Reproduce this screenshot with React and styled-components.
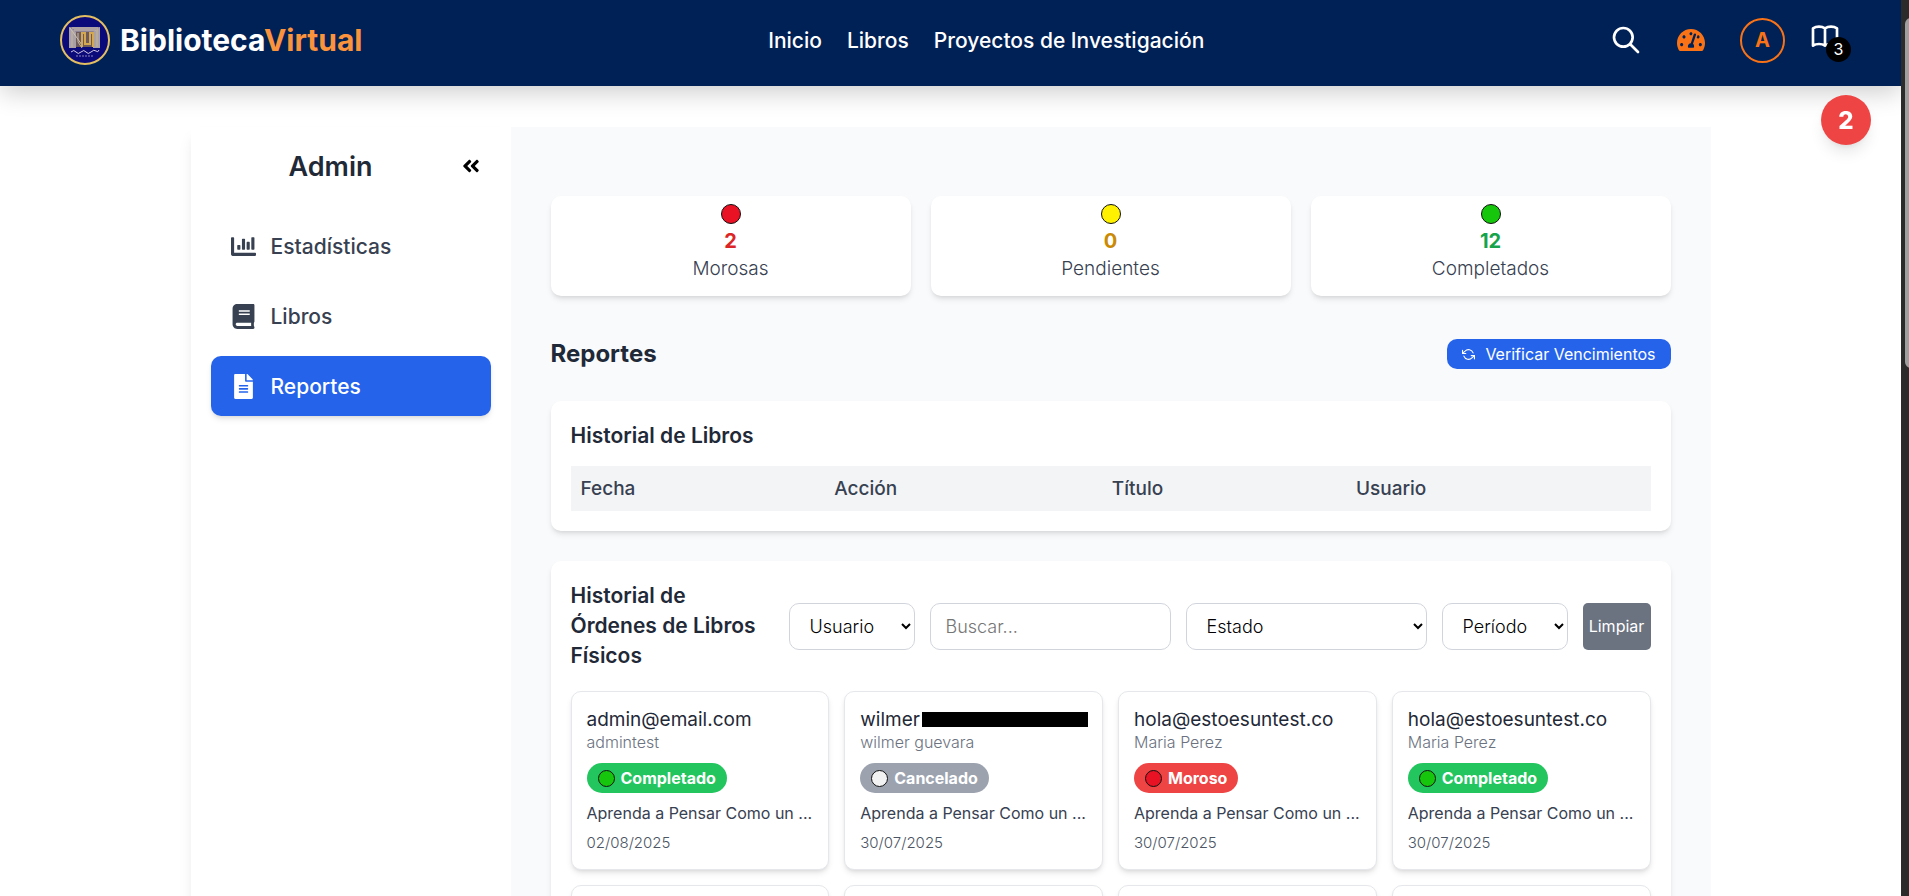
import React from "react";
import styled, { createGlobalStyle, css } from "styled-components";
import { FaChartBar, FaBook, FaFileAlt, FaTachometerAlt, FaAngleDoubleLeft } from "react-icons/fa";
import { FiRefreshCcw } from "react-icons/fi";
import { HiOutlineSearch, HiOutlineBookOpen } from "react-icons/hi";

const GlobalStyle = createGlobalStyle`
  *, *::before, *::after { box-sizing: border-box; }
  body {
    margin: 0;
    background: #fff;
    color: #1f2937;
    font-family: Inter, "Open Sans", sans-serif;
  }
  h1, h2, h3, p { margin: 0; }
  button, input, select { font: inherit; }
`;

const Window = styled.div`
  display: grid;
  grid-template-columns: minmax(0, 1fr) 8px;
  height: 100vh;
  overflow: hidden;
`;

const Page = styled.div`
  overflow: hidden;
`;

const ScrollTrack = styled.div`
  background: #2b2b2b;
  padding: 18px 0 0 4px;
  overflow: hidden;
`;

const ScrollThumb = styled.div`
  width: 12px;
  height: 350px;
  border-radius: 6px;
  background: #9f9f9f;
`;

const Header = styled.header`
  position: relative;
  display: flex;
  justify-content: space-between;
  align-items: center;
  height: 86px;
  padding: 0 50px 6px 60px;
  background: #002156;
  color: #fff;
  box-shadow: 0 6px 24px rgba(0, 0, 0, 0.2);
`;

const Brand = styled.a`
  display: flex;
  align-items: center;
  gap: 10px;
  color: #fff;
  font-size: 30px;
  font-weight: 700;
  text-decoration: none;
`;

const BrandAccent = styled.span`
  color: #fb923c;
`;

const Nav = styled.nav`
  display: flex;
  gap: 25px;
`;

const NavLink = styled.a`
  color: #fff;
  font-size: 21px;
  font-weight: 500;
  text-decoration: none;
`;

const Actions = styled.div`
  display: flex;
  align-items: center;
`;

const IconButton = styled.button`
  display: flex;
  margin: 0 35px 0 0;
  padding: 0;
  border: 0;
  background: none;
  color: ${(p) => p.$color || "#fff"};
`;

const Avatar = styled.button`
  width: 45px;
  height: 45px;
  margin: 0 20px 0 0;
  padding: 0;
  border: 2px solid #f97316;
  border-radius: 50%;
  background: none;
  color: #f97316;
  font-size: 20px;
  font-weight: 700;
`;

const CartButton = styled.button`
  position: relative;
  display: flex;
  align-items: flex-start;
  width: 46px;
  height: 44px;
  padding: 2px 0 0 4px;
  border: 0;
  background: none;
  color: #fff;
`;

const CartCount = styled.span`
  position: absolute;
  right: 0;
  bottom: 0;
  width: 25px;
  height: 25px;
  border-radius: 50%;
  background: #000;
  font-size: 16px;
  line-height: 25px;
  text-align: center;
`;

const Alert = styled.button`
  position: fixed;
  top: 95px;
  right: 38px;
  width: 50px;
  height: 50px;
  padding: 0;
  border: 0;
  border-radius: 50%;
  background: #ef4444;
  color: #fff;
  font-size: 24px;
  font-weight: 800;
  box-shadow: 0 10px 15px -3px rgba(0, 0, 0, 0.1), 0 4px 6px -4px rgba(0, 0, 0, 0.1);
`;

const Dashboard = styled.div`
  display: flex;
  width: 80%;
  max-width: 1520px;
  margin: 41px auto 0;
`;

const Sidebar = styled.aside`
  flex: 0 0 320px;
  padding: 20px;
  background: #fff;
  box-shadow: 0 10px 15px -3px rgba(0, 0, 0, 0.1), 0 4px 6px -4px rgba(0, 0, 0, 0.1);
`;

const SidebarHead = styled.div`
  display: flex;
  align-items: center;
  height: 38px;
`;

const SidebarTitle = styled.h1`
  flex: 1;
  font-size: 27px;
  font-weight: 600;
  text-align: center;
`;

const Collapse = styled.button`
  display: flex;
  justify-content: center;
  width: 40px;
  padding: 0;
  border: 0;
  background: none;
  color: #000;
`;

const Menu = styled.nav`
  display: flex;
  flex-direction: column;
  gap: 10px;
  margin-top: 31px;
`;

const MenuItem = styled.button`
  display: flex;
  align-items: center;
  gap: 15px;
  height: 60px;
  padding: 0 20px;
  border: 0;
  border-radius: 10px;
  background: none;
  color: #374151;
  font-size: 21px;
  font-weight: 500;
  ${(p) =>
    p.$active &&
    css`
      background: #2563eb;
      color: #fff;
      box-shadow: 0 4px 6px -1px rgba(0, 0, 0, 0.1), 0 2px 4px -2px rgba(0, 0, 0, 0.1);
    `}
`;

const Content = styled.main`
  flex: 1;
  min-width: 0;
  padding: 69px 40px 40px;
  background: #f9fafb;
`;

const panel = css`
  border-radius: 10px;
  background: #fff;
  box-shadow: 0 4px 6px -1px rgba(0, 0, 0, 0.1), 0 2px 4px -2px rgba(0, 0, 0, 0.1);
`;

const Stats = styled.section`
  display: grid;
  grid-template-columns: repeat(3, 1fr);
  gap: 20px;
`;

const StatCard = styled.div`
  ${panel}
  display: flex;
  flex-direction: column;
  align-items: center;
  height: 100px;
  padding-top: 8px;
`;

const Dot = styled.span`
  width: ${(p) => p.$size}px;
  height: ${(p) => p.$size}px;
  border: 1px solid #111;
  border-radius: 50%;
  background: ${(p) => p.$color};
`;

const StatValue = styled.strong`
  margin-top: 3px;
  color: ${(p) => p.$color};
  font-size: 20px;
  font-weight: 700;
  line-height: 28px;
`;

const StatLabel = styled.span`
  color: #374151;
  font-size: 19px;
  font-weight: 300;
  line-height: 28px;
`;

const TitleRow = styled.div`
  display: flex;
  justify-content: space-between;
  align-items: center;
  margin: 40px 0 29px;
`;

const Title = styled.h2`
  font-size: 24px;
  font-weight: 700;
  line-height: 36px;
`;

const VerifyButton = styled.button`
  display: flex;
  align-items: center;
  gap: 10px;
  height: 30px;
  padding: 0 15px;
  border: 0;
  border-radius: 10px;
  background: #2563eb;
  color: #fff;
  font-size: 16px;
  font-weight: 400;
`;

const Panel = styled.section`
  ${panel}
  padding: 20px;
  margin-bottom: 30px;
`;

const PanelTitle = styled.h3`
  flex: ${(p) => (p.$width ? `0 0 ${p.$width}px` : "none")};
  font-size: 21px;
  font-weight: 600;
  line-height: 30px;
`;

const Table = styled.table`
  width: 100%;
  margin-top: 15px;
  border-collapse: collapse;
  table-layout: fixed;
`;

const Th = styled.th`
  width: ${(p) => p.$width};
  height: 45px;
  padding: 0 10px;
  background: #f3f4f6;
  color: #374151;
  font-size: 19px;
  font-weight: 500;
  text-align: left;
`;

const Filters = styled.form`
  display: flex;
  align-items: center;
  gap: 15px;
`;

const field = css`
  height: 47px;
  min-width: 0;
  border: 1px solid #d1d5db;
  border-radius: 10px;
  background: #fff;
  color: #000;
  font-size: 18px;
  font-weight: 300;
`;

const Select = styled.select`
  ${field}
  flex: ${(p) => (p.$wide ? "1 1 240px" : "0 0 126px")};
  padding: 0 0 0 16px;
`;

const Input = styled.input`
  ${field}
  flex: 1 1 240px;
  padding: 0 15px;
  &::placeholder { color: #757575; opacity: 1; }
`;

const ClearButton = styled.button`
  flex: 0 0 68px;
  height: 47px;
  padding: 0;
  border: 0;
  border-radius: 5px;
  background: #6b7280;
  color: #fff;
  font-size: 16px;
`;

const Orders = styled.div`
  display: grid;
  grid-template-columns: repeat(4, minmax(0, 1fr));
  gap: 15px;
  margin-top: 20px;
`;

const OrderCard = styled.article`
  ${panel}
  display: flex;
  flex-direction: column;
  align-items: flex-start;
  height: 179px;
  padding: 15px;
  border: 1px solid #e5e7eb;
`;

const Email = styled.p`
  display: flex;
  align-items: center;
  gap: 2px;
  font-size: 19px;
  line-height: 25px;
`;

const Redaction = styled.span`
  width: 166px;
  height: 15px;
  background: #000;
`;

const Person = styled.p`
  color: #6b7280;
  font-size: 16px;
  font-weight: 300;
  line-height: 20px;
`;

const Badge = styled.span`
  display: flex;
  align-items: center;
  gap: 6px;
  height: 30px;
  margin: 11px 0 10px;
  padding: 0 11px;
  border-radius: 15px;
  background: ${(p) => p.$color};
  color: #fff;
  font-size: 16px;
  font-weight: 700;
`;

const BookName = styled.p`
  color: #374151;
  font-size: 16px;
  line-height: 20px;
`;

const OrderDate = styled.time`
  margin-top: 10px;
  color: #4b5563;
  font-size: 15px;
  font-weight: 300;
  line-height: 20px;
`;

const Emblem = () => (
  <svg width="50" height="50" viewBox="0 0 50 50" aria-hidden="true">
    <circle cx="25" cy="25" r="24" fill="#0b0a7a" stroke="#e3bf62" strokeWidth="2" />
    <path d="M9 12h31v5H9z" fill="#8d8194" />
    <path d="M9 12l7 5v16H9zM40 12l-7 5v16h7z" fill="#a9a1a6" />
    <path d="M16 17h17v15H16z" fill="#6d5a5c" />
    <path d="M10 13l12 17M12 13h26M14 15h22" fill="none" stroke="#cfc3b6" strokeWidth="1" />
    <path d="M22 32V18h3v11h5V18h3v14" fill="none" stroke="#d3a850" strokeWidth="2" />
    <path d="M18 18v9l4 6M37 14v18M12 16v16" fill="none" stroke="#c7b79d" strokeWidth="1" />
    <path d="M11 37q3-3 5 0t5 0 5 0 5 0 5-1 3-1" fill="none" stroke="#d0c7df" strokeWidth="1" />
    <path d="M16 41h18" stroke="#8a82b9" strokeWidth="1" strokeDasharray="2 1" />
  </svg>
);

const RED = "#e81224";
const GREEN = "#16c60c";

const stats = [
  { label: "Morosas", value: 2, dot: RED, color: "#dc2626" },
  { label: "Pendientes", value: 0, dot: "#fff100", color: "#ca8a04" },
  { label: "Completados", value: 12, dot: GREEN, color: "#16a34a" },
];

const states = {
  Completado: { color: "#22c55e", dot: GREEN },
  Cancelado: { color: "#9ca3af", dot: "#f2f2f2" },
  Moroso: { color: "#ef4444", dot: RED },
};

const orders = [
  { email: "admin@email.com", person: "admintest", state: "Completado", date: "02/08/2025" },
  { email: "wilmer", hidden: true, person: "wilmer guevara", state: "Cancelado", date: "30/07/2025" },
  { email: "hola@estoesuntest.co", person: "Maria Perez", state: "Moroso", date: "30/07/2025" },
  { email: "hola@estoesuntest.co", person: "Maria Perez", state: "Completado", date: "30/07/2025" },
];

const Order = ({ order }) => (
  <OrderCard>
    <Email>
      {order.email}
      {order.hidden && <Redaction />}
    </Email>
    <Person>{order.person}</Person>
    <Badge $color={states[order.state].color}>
      <Dot $size={17} $color={states[order.state].dot} />
      {order.state}
    </Badge>
    <BookName>Aprenda a Pensar Como un ...</BookName>
    <OrderDate>{order.date}</OrderDate>
  </OrderCard>
);

export default function App() {
  return (
    <>
      <GlobalStyle />
      <Window>
        <Page>
          <Header>
            <Brand href="#inicio">
              <Emblem />
              <span>Biblioteca<BrandAccent>Virtual</BrandAccent></span>
            </Brand>
            <Nav aria-label="Principal">
              <NavLink href="#inicio">Inicio</NavLink>
              <NavLink href="#libros">Libros</NavLink>
              <NavLink href="#proyectos">Proyectos de Investigación</NavLink>
            </Nav>
            <Actions>
              <IconButton aria-label="Buscar"><HiOutlineSearch size={32} /></IconButton>
              <IconButton aria-label="Panel" $color="#f97316"><FaTachometerAlt size={28} /></IconButton>
              <Avatar>A</Avatar>
              <CartButton aria-label="Pedidos">
                <HiOutlineBookOpen size={32} />
                <CartCount>3</CartCount>
              </CartButton>
            </Actions>
          </Header>
          <Dashboard>
            <Sidebar>
              <SidebarHead>
                <SidebarTitle>Admin</SidebarTitle>
                <Collapse aria-label="Contraer"><FaAngleDoubleLeft size={20} /></Collapse>
              </SidebarHead>
              <Menu aria-label="Administración">
                <MenuItem><FaChartBar size={25} />Estadísticas</MenuItem>
                <MenuItem><FaBook size={25} />Libros</MenuItem>
                <MenuItem $active><FaFileAlt size={25} />Reportes</MenuItem>
              </Menu>
            </Sidebar>
            <Content>
              <Stats>
                {stats.map((s) => (
                  <StatCard key={s.label}>
                    <Dot $size={20} $color={s.dot} />
                    <StatValue $color={s.color}>{s.value}</StatValue>
                    <StatLabel>{s.label}</StatLabel>
                  </StatCard>
                ))}
              </Stats>
              <TitleRow>
                <Title>Reportes</Title>
                <VerifyButton><FiRefreshCcw size={13} />Verificar Vencimientos</VerifyButton>
              </TitleRow>
              <Panel>
                <PanelTitle>Historial de Libros</PanelTitle>
                <Table>
                  <thead>
                    <tr>
                      <Th $width="23.5%">Fecha</Th>
                      <Th $width="25.7%">Acción</Th>
                      <Th $width="22.6%">Título</Th>
                      <Th>Usuario</Th>
                    </tr>
                  </thead>
                </Table>
              </Panel>
              <Panel>
                <Filters onSubmit={(e) => e.preventDefault()}>
                  <PanelTitle $width={203}>Historial de Órdenes de Libros Físicos</PanelTitle>
                  <Select aria-label="Usuario"><option>Usuario</option></Select>
                  <Input aria-label="Buscar" placeholder="Buscar..." />
                  <Select $wide aria-label="Estado"><option>Estado</option></Select>
                  <Select aria-label="Período"><option>Período</option></Select>
                  <ClearButton type="button">Limpiar</ClearButton>
                </Filters>
                <Orders>
                  {orders.map((o, i) => <Order key={i} order={o} />)}
                  {orders.map((o, i) => <OrderCard key={`next-${i}`} />)}
                </Orders>
              </Panel>
            </Content>
          </Dashboard>
        </Page>
        <ScrollTrack><ScrollThumb /></ScrollTrack>
      </Window>
      <Alert aria-label="2 avisos">2</Alert>
    </>
  );
}
